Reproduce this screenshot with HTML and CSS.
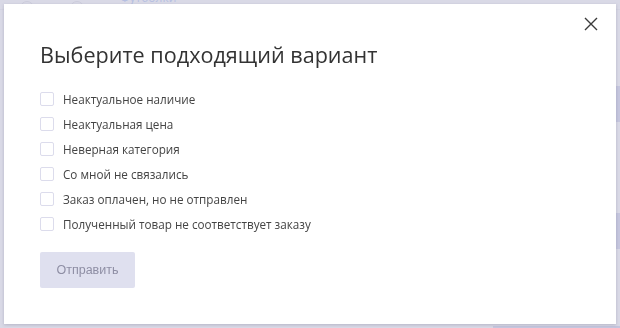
FILE: index.html
```html
<!DOCTYPE html>
<html lang="ru">
<head>
    <meta charset="UTF-8">
    <title>Выберите подходящий вариант</title>
    <link rel="stylesheet" href="styles.css">
</head>
<body>
    <div class="page">
        <div class="page-top">
            <span class="crumb-icon"></span>
            <span class="crumb-icon"></span>
            <span class="crumb">Футболки</span>
        </div>
        <div class="page-side">
            <div class="side-card"></div>
            <div class="side-card"></div>
        </div>
        <div class="page-bottom"></div>
    </div>

    <div class="overlay"></div>

    <div class="modal">
        <button class="close" aria-label="Закрыть">
            <svg width="14" height="14" viewBox="0 0 14 14">
                <path d="M1 1 L13 13 M13 1 L1 13" stroke="#3a3a3a" stroke-width="1.4" fill="none"/>
            </svg>
        </button>
        <h2 class="title">Выберите подходящий вариант</h2>
        <ul class="options">
            <li><label><input type="checkbox"><span class="box"></span>Неактуальное наличие</label></li>
            <li><label><input type="checkbox"><span class="box"></span>Неактуальная цена</label></li>
            <li><label><input type="checkbox"><span class="box"></span>Неверная категория</label></li>
            <li><label><input type="checkbox"><span class="box"></span>Со мной не связались</label></li>
            <li><label><input type="checkbox"><span class="box"></span>Заказ оплачен, но не отправлен</label></li>
            <li><label><input type="checkbox"><span class="box"></span>Полученный товар не соответствует заказу</label></li>
        </ul>
        <button class="submit" disabled>Отправить</button>
    </div>
</body>
</html>
```

FILE: styles.css
```css
* {
    margin: 0;
    padding: 0;
    box-sizing: border-box;
}

body {
    font-family: 'Open Sans', 'Noto Sans', sans-serif;
    width: 620px;
    height: 328px;
    overflow: hidden;
    background: #f4f4f8;
}

.page {
    height: 328px;
    position: relative;
}

.page-top {
    height: 10px;
    display: flex;
    align-items: flex-end;
    gap: 36px;
    padding-left: 20px;
    border-bottom: 1px solid #e2e2ea;
}

.crumb-icon {
    width: 14px;
    height: 14px;
    border: 1px solid #c8c8d2;
    border-radius: 50%;
    margin-bottom: -6px;
}

.crumb {
    color: #7f9ee6;
    font-size: 12px;
    line-height: 16px;
    margin-bottom: 3px;
}

.page-side {
    position: absolute;
    right: 0;
    top: 86px;
    display: flex;
    flex-direction: column;
    gap: 91px;
}

.side-card {
    width: 20px;
    height: 36px;
    background: #b3b4dc;
}

.page-bottom {
    position: absolute;
    right: 0;
    bottom: 0;
    width: 127px;
    height: 2px;
    background: #b3b4dc;
}

.overlay {
    position: fixed;
    inset: 0;
    background: rgba(205, 205, 222, 0.7);
}

.modal {
    position: fixed;
    left: 4px;
    top: 4px;
    width: 612px;
    height: 320px;
    background: #fff;
    box-shadow: 0 1px 3px rgba(80, 80, 110, 0.25);
    padding: 36px 36px 0 36px;
}

.close {
    position: absolute;
    right: 18px;
    top: 13px;
    width: 14px;
    height: 14px;
    border: none;
    background: none;
    cursor: pointer;
    display: flex;
}

.title {
    font-weight: 400;
    font-size: 21.6px;
    line-height: 30px;
    color: #333;
    margin-bottom: 16px;
}

.options {
    list-style: none;
    display: flex;
    flex-direction: column;
    margin-bottom: 16px;
}

.options li {
    height: 25px;
    display: flex;
    align-items: center;
}

.options label {
    display: flex;
    align-items: center;
    font-size: 11.7px;
    color: #444;
    cursor: pointer;
}

.options input {
    display: none;
}

.box {
    width: 14px;
    height: 14px;
    border: 1px solid #dcdcec;
    border-radius: 2px;
    margin-right: 9px;
}

.submit {
    width: 95px;
    height: 36px;
    border: none;
    border-radius: 2px;
    background: #dfe0ef;
    color: #8e8ea4;
    font-family: 'Liberation Sans', Arial, sans-serif;
    font-size: 12.5px;
}
```
